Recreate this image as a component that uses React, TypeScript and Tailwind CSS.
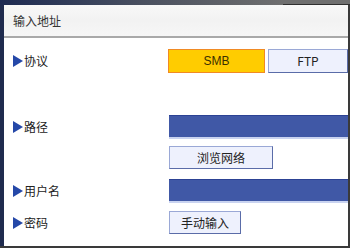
import React from 'react';

const font = { fontFamily: '"Noto Sans CJK SC", "Noto Sans", sans-serif' };

function Arrow() {
  return (
    <svg width="10" height="12" viewBox="0 0 10 12" className="shrink-0">
      <polygon points="0,0 10,6 0,12" fill="#2548a8" />
    </svg>
  );
}

function Label({ text }: { text: string }) {
  return (
    <div className="w-[155px] shrink-0 flex items-center gap-[1px] text-[12px] text-[#222]">
      <Arrow />
      <span>{text}</span>
    </div>
  );
}

function Btn({ text, className = '' }: { text: string; className?: string }) {
  return (
    <div
      className={
        'h-[23px] flex items-center justify-center bg-[#eef1fd] border border-[#9aa8d6] border-r-[#5a6ca8] border-b-[#5a6ca8] text-[12px] text-[#222] ' +
        className
      }
    >
      {text}
    </div>
  );
}

function Bar() {
  return (
    <div className="flex-1 ml-[1px] h-[24px] bg-[#4058a6] border-t border-t-[#2c4294] border-b-2 border-b-[#c9d3f0]" />
  );
}

export default function App() {
  return (
    <div className="w-[350px] h-[248px] flex flex-col bg-[#2a2a2a] overflow-hidden" style={font}>
      {/* window frame top */}
      <div className="h-[5px] flex shrink-0">
        <div className="w-[283px] bg-gradient-to-r from-[#1d2a52] via-[#4a5060] to-[#6f6f6f]" />
        <div className="flex-1 bg-[#6f6f6f] border-b border-b-[#2f2f2f]" />
      </div>
      <div className="flex-1 flex min-h-0">
        <div className="w-[4px] bg-[#1f2b4e]" />
        <div className="flex-1 bg-white flex flex-col">
          {/* title */}
          <div className="h-[31px] shrink-0 flex items-center pl-[9px] text-[12px] text-[#333] bg-[#f4f4f4] bg-gradient-to-b from-[#f8f8f8] via-[#f2f2f2] to-[#f6f6f6]">
            输入地址
          </div>
          <div className="h-[2px] bg-[#a9a9a9] shrink-0" />
          {/* body */}
          <div className="flex flex-col pl-[9px] pt-[11px]">
            <div className="flex items-center h-[24px]">
              <Label text="协议" />
              <div className="w-[97px] h-[24px] flex items-center justify-center bg-[#ffcc00] border border-[#f08a24] text-[12px] text-[#3a3000]" style={{ fontFamily: '"Liberation Sans", sans-serif' }}>
                SMB
              </div>
              <div className="ml-[3px] w-[80px]">
                <Btn text="FTP" className="h-[24px] mb-[1px]" />
              </div>
            </div>
            <div className="flex items-center h-[24px] mt-[42px]">
              <Label text="路径" />
              <Bar />
            </div>
            <div className="flex items-center mt-[7px]">
              <div className="w-[156px] shrink-0" />
              <Btn text="浏览网络" className="w-[104px]" />
            </div>
            <div className="flex items-center h-[24px] mt-[10px]">
              <Label text="用户名" />
              <Bar />
            </div>
            <div className="flex items-center mt-[8px]">
              <Label text="密码" />
              <Btn text="手动输入" className="w-[72px] ml-[1px]" />
            </div>
          </div>
        </div>
        <div className="w-[2px] bg-[#3a3a3a]" />
      </div>
      <div className="h-[2px] bg-[#3a3a3a] shrink-0" />
    </div>
  );
}
